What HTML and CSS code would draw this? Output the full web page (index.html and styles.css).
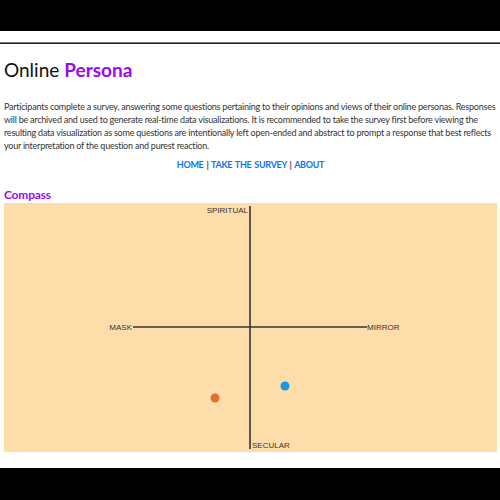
FILE: index.html
```html
<!DOCTYPE html>
<html>
<head>
<meta charset="utf-8">
<link rel="stylesheet" href="styles.css">
</head>
<body>
<header class="topbar"></header>
<hr class="rule">
<main class="content">
  <h1 class="title">Online <span class="accent">Persona</span></h1>
  <p class="intro">Participants complete a survey, answering some questions pertaining to their opinions and views of their online personas. Responses will be archived and used to generate real-time data visualizations. It is recommended to take the survey first before viewing the resulting data visualization as some questions are intentionally left open-ended and abstract to prompt a response that best reflects your interpretation of the question and purest reaction.</p>
  <nav class="nav"><a href="#">HOME</a> | <a href="#">TAKE THE SURVEY</a> | <a href="#">ABOUT</a></nav>
  <h2 class="section">Compass</h2>
  <div class="chart">
    <svg class="compass" width="493" height="249" viewBox="0 0 493 249">
      <line x1="246" y1="3" x2="246" y2="246" stroke="#333" stroke-width="1.6"/>
      <line x1="129" y1="124" x2="363" y2="124" stroke="#333" stroke-width="1.6"/>
      <text x="244" y="10" text-anchor="end" class="lbl">SPIRITUAL</text>
      <text x="128" y="127" text-anchor="end" class="lbl">MASK</text>
      <text x="363" y="127" class="lbl">MIRROR</text>
      <text x="248" y="245" class="lbl">SECULAR</text>
      <circle cx="211" cy="195" r="4.5" fill="#e0702c"/>
      <circle cx="281" cy="183" r="4.5" fill="#1a98e6"/>
    </svg>
  </div>
</main>
<footer class="bottombar"></footer>
</body>
</html>
```
FILE: styles.css
```css
html, body { margin: 0; padding: 0; background: #fff; }
body { width: 500px; height: 500px; overflow: hidden; font-family: Lato, "Open Sans", sans-serif; }
.topbar { height: 31px; background: #000; }
.rule { margin: 11px 0 0 0; border: 0; border-top: 1px solid #777; border-bottom: 1px solid #222; height: 0; }
.content { display: flow-root; padding: 0 3px 0 4px; height: 424px; }
.title { margin: 13px 0 0 0; font-size: 19px; font-weight: 400; line-height: 26px; color: #111; }
.accent { color: #9a08f4; font-weight: 700; }
.intro { margin: 17px 0 0 0; font-size: 9px; letter-spacing: -0.22px; line-height: 13px; color: #333; }
.nav { margin: 6px 0 0 0; text-align: center; font-size: 9px; letter-spacing: -0.3px; word-spacing: 1px; font-weight: 700; color: #444; line-height: 13px; }
.nav a { color: #0d74f0; text-decoration: none; }
.section { margin: 16px 0 0 0; font-size: 12px; letter-spacing: -0.2px; font-weight: 700; color: #9a08f4; line-height: 16px; }
.chart { margin-top: 0; height: 249px; background: #fddeaa; }
.compass { display: block; }
.lbl { font-family: "Liberation Sans", Arial, sans-serif; font-size: 8px; fill: #333; }
.bottombar { height: 32px; background: #000; }
```
